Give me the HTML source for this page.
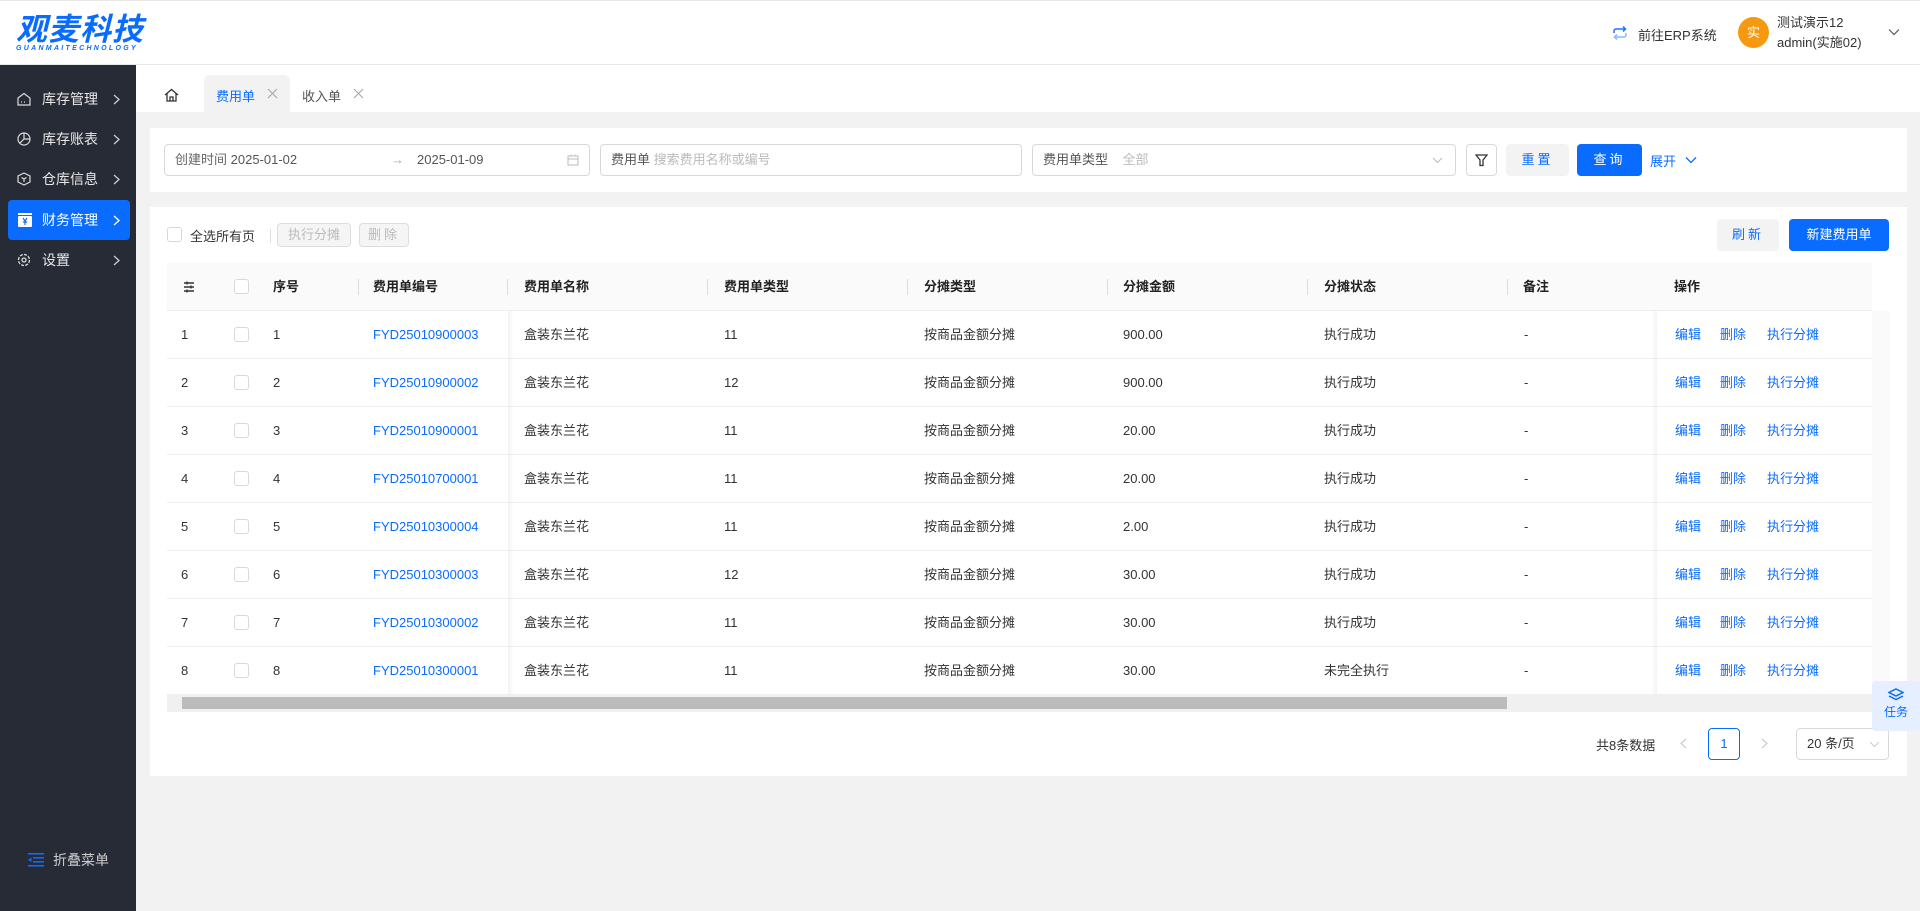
<!DOCTYPE html>
<html><head><meta charset="utf-8">
<style>
*{box-sizing:border-box;margin:0;padding:0}
body{width:1920px;height:911px;overflow:hidden;background:#f2f2f2;font-family:"Liberation Sans","Noto Sans CJK SC",sans-serif;font-size:12px;color:#333;position:relative}
.a{position:absolute}
.hdr{left:0;top:0;width:1920px;height:65px;background:#fff;border-bottom:1px solid #e8e8e8;border-top:1px solid #e8e8e8}
.side{left:0;top:65px;width:136px;height:846px;background:#272b36}
.mi{position:absolute;left:8px;width:122px;height:40px;color:#e8e8e8;font-size:14px;line-height:40px;padding-left:34px;border-radius:4px}
.mi svg{position:absolute;left:9px;top:13px}
.mi svg.ch{left:auto;right:10px;top:15px}
.mi.act{background:#0a6cff;color:#fff}
.card{background:#fff}
.inp{position:absolute;height:32px;border:1px solid #d9d9d9;border-radius:4px;background:#fff;line-height:30px;font-size:13px;color:#555;padding-left:10px}
.btn{position:absolute;height:32px;border-radius:4px;line-height:32px;text-align:center;font-size:13px}
.th{position:absolute;top:263px;height:48px;line-height:48px;font-weight:bold;color:#222;font-size:13px}
.sep{position:absolute;top:279px;width:1px;height:16px;background:#ddd}
.row{position:absolute;left:167px;width:1705px;height:48px;border-bottom:1px solid #eee}
.c{position:absolute;top:0;line-height:47px;color:#333;font-size:13px}
.cb{position:absolute;width:15px;height:15px;border:1px solid #d9d9d9;border-radius:3px;background:#fff}
.lnk{color:#0a6cff}
</style></head><body>
<div class="a hdr">
  <div class="a" style="left:16px;top:8px;color:#0a6cff;font-size:31px;font-style:italic;font-weight:bold;letter-spacing:1px;line-height:36px;font-family:'Noto Sans CJK SC',sans-serif">观麦科技</div>
  <div class="a" style="left:16px;top:44px;color:#0a6cff;font-size:7px;font-style:italic;font-weight:bold;letter-spacing:2.3px">GUANMAITECHNOLOGY</div>
  <svg class="a" style="left:1612px;top:24px" width="16" height="16" viewBox="0 0 16 16" fill="none" stroke="#1a73ff" stroke-width="1.5"><path d="M2 8V6a2 2 0 0 1 2-2h9M11 1.5 13.5 4 11 6.5"/><path d="M14 8v2a2 2 0 0 1-2 2H3M5 14.5 2.5 12 5 9.5" stroke="#8ab8ff"/></svg>
  <div class="a" style="left:1638px;top:24px;font-size:13px;color:#333">前往ERP系统</div>
  <div class="a" style="left:1738px;top:16px;width:31px;height:31px;border-radius:50%;background:#f59a10;color:#fff;text-align:center;line-height:31px;font-size:13px">实</div>
  <div class="a" style="left:1777px;top:12px;font-size:13px;color:#333;line-height:20px">测试演示12<br>admin(实施02)</div>
  <svg class="a" style="left:1888px;top:27px" width="12" height="8" viewBox="0 0 12 8" fill="none" stroke="#555" stroke-width="1.2"><path d="M1 1.5 6 6.5 11 1.5"/></svg>
</div>
<div class="a side">
  <div class="mi" style="top:14px"><svg width="14" height="14" viewBox="0 0 14 14" fill="none" stroke="#ddd" stroke-width="1.2"><path d="M1 6 7 1.5 13 6v7H1z M4 10h1M7 10h1"/></svg>库存管理<svg class="ch" width="7" height="11" viewBox="0 0 7 11" fill="none" stroke="#ccc" stroke-width="1.3"><path d="M1 1l5 4.5L1 10"/></svg></div>
  <div class="mi" style="top:54px"><svg width="14" height="14" viewBox="0 0 14 14" fill="none" stroke="#ddd" stroke-width="1.2"><circle cx="7" cy="7" r="6"/><path d="M7 1v6h6M7 7l-4 4"/></svg>库存账表<svg class="ch" width="7" height="11" viewBox="0 0 7 11" fill="none" stroke="#ccc" stroke-width="1.3"><path d="M1 1l5 4.5L1 10"/></svg></div>
  <div class="mi" style="top:94px"><svg width="14" height="14" viewBox="0 0 14 14" fill="none" stroke="#ddd" stroke-width="1.2"><path d="M7 1 13 4v6l-6 3-6-3V4z M4.5 5.5 7 7l2.5-1.5M7 7v3"/></svg>仓库信息<svg class="ch" width="7" height="11" viewBox="0 0 7 11" fill="none" stroke="#ccc" stroke-width="1.3"><path d="M1 1l5 4.5L1 10"/></svg></div>
  <div class="mi act" style="top:135px"><svg width="16" height="14" viewBox="0 0 16 14"><rect x="1" y="0" width="14" height="2" fill="#fff"/><rect x="1" y="3" width="14" height="11" rx="1" fill="#fff"/><path d="M6 5l2 3 2-3M8 8v4M6 9h4" stroke="#0a6cff" stroke-width="1.2" fill="none"/></svg>财务管理<svg class="ch" width="7" height="11" viewBox="0 0 7 11" fill="none" stroke="#fff" stroke-width="1.3"><path d="M1 1l5 4.5L1 10"/></svg></div>
  <div class="mi" style="top:175px"><svg width="14" height="14" viewBox="0 0 14 14" fill="none" stroke="#ddd" stroke-width="1.3"><circle cx="7" cy="7" r="2"/><circle cx="7" cy="7" r="5.5" stroke-dasharray="3 1.3"/></svg>设置<svg class="ch" width="7" height="11" viewBox="0 0 7 11" fill="none" stroke="#ccc" stroke-width="1.3"><path d="M1 1l5 4.5L1 10"/></svg></div>
  <svg class="a" style="left:28px;top:788px" width="16" height="14" viewBox="0 0 16 14" fill="#0a6cff"><rect x="0" y="0" width="16" height="1.6"/><rect x="5" y="4" width="11" height="1.6"/><rect x="5" y="8" width="11" height="1.6"/><rect x="0" y="12" width="16" height="1.6"/><path d="M0 6.8 3.5 4.5v4.6z"/></svg>
  <div class="a" style="left:53px;top:785px;color:#ccc;font-size:14px">折叠菜单</div>
</div>
<!-- tabs -->
<div class="a" style="left:136px;top:65px;width:1784px;height:47px;background:#fff"></div>
<svg class="a" style="left:164px;top:88px" width="15" height="14" viewBox="0 0 15 14" fill="none" stroke="#333" stroke-width="1.3"><path d="M1 7 7.5 1.5 14 7M3 5.5V13h9V5.5M6 13V9h3v4"/></svg>
<div class="a" style="left:204px;top:75px;width:86px;height:37px;background:#f2f2f2;border-radius:6px 6px 0 0"></div>
<div class="a" style="left:216px;top:86px;color:#0a6cff;font-size:13px">费用单</div>
<svg class="a" style="left:267px;top:88px" width="11" height="11" viewBox="0 0 11 11" stroke="#aaa" stroke-width="1.2"><path d="M1 1l9 9M10 1l-9 9"/></svg>
<div class="a" style="left:302px;top:86px;color:#555;font-size:13px">收入单</div>
<svg class="a" style="left:353px;top:88px" width="11" height="11" viewBox="0 0 11 11" stroke="#aaa" stroke-width="1.2"><path d="M1 1l9 9M10 1l-9 9"/></svg>
<!-- filter card -->
<div class="a card" style="left:150px;top:128px;width:1757px;height:64px"></div>
<div class="inp" style="left:164px;top:144px;width:426px"><span style="color:#666">创建时间</span> 2025-01-02<span class="a" style="left:226px;color:#aaa">→</span><span class="a" style="left:252px">2025-01-09</span><svg class="a" style="right:10px;top:9px" width="12" height="12" viewBox="0 0 12 12" fill="none" stroke="#bbb"><rect x="1" y="2" width="10" height="9"/><path d="M1 5h10M4 0.5v2M8 0.5v2"/></svg></div>
<div class="inp" style="left:600px;top:144px;width:422px"><span style="color:#555">费用单</span> <span style="color:#bbb">搜索费用名称或编号</span></div>
<div class="inp" style="left:1032px;top:144px;width:424px"><span style="color:#555">费用单类型</span>&nbsp;&nbsp;&nbsp;&nbsp;<span style="color:#bbb">全部</span><svg class="a" style="right:12px;top:12px" width="11" height="7" viewBox="0 0 11 7" fill="none" stroke="#bbb"><path d="M1 1l4.5 4.5L10 1"/></svg></div>
<div class="btn" style="left:1466px;top:144px;width:31px;border:1px solid #d9d9d9"><svg style="margin-top:9px" width="13" height="13" viewBox="0 0 13 13" fill="none" stroke="#333" stroke-width="1.3"><path d="M1 1h11L8 6v5.5H5V6z"/></svg></div>
<div class="btn" style="left:1506px;top:144px;width:63px;background:#f3f3f3;color:#0a6cff;letter-spacing:3px">重置</div>
<div class="btn" style="left:1577px;top:144px;width:65px;background:#0a6cff;color:#fff;letter-spacing:3px">查询</div>
<div class="a" style="left:1650px;top:151px;color:#0a6cff;font-size:13px">展开</div>
<svg class="a" style="left:1685px;top:156px" width="12" height="8" viewBox="0 0 12 8" fill="none" stroke="#0a6cff" stroke-width="1.3"><path d="M1 1.5 6 6.5 11 1.5"/></svg>
<!-- table card -->
<div class="a card" style="left:150px;top:207px;width:1757px;height:569px"></div>
<div class="cb" style="left:167px;top:227px"></div>
<div class="a" style="left:190px;top:226px;font-size:13px;color:#333">全选所有页</div>
<div class="a" style="left:270px;top:229px;width:1px;height:14px;background:#ddd"></div>
<div class="btn" style="left:277px;top:223px;width:74px;height:24px;line-height:22px;border:1px solid #ddd;background:#f5f5f5;color:#bbb">执行分摊</div>
<div class="btn" style="left:359px;top:223px;width:50px;height:24px;line-height:22px;border:1px solid #ddd;background:#f5f5f5;color:#bbb;letter-spacing:3px">删除</div>
<div class="btn" style="left:1717px;top:219px;width:62px;background:#f3f3f3;color:#0a6cff;letter-spacing:3px">刷新</div>
<div class="btn" style="left:1789px;top:219px;width:100px;background:#0a6cff;color:#fff">新建费用单</div>
<div class="a" style="left:167px;top:263px;width:1705px;height:48px;background:#fafafa;border-bottom:1px solid #eee"></div>
<svg class="a" style="left:183px;top:281px" width="12" height="12" viewBox="0 0 12 12" stroke="#333" stroke-width="1.4"><path d="M1 2h10M1 6h10M1 10h10"/><path d="M4 0.5v3M8 4.5v3M4 8.5v3"/></svg>
<div class="cb" style="left:234px;top:279px"></div>
<div class="th" style="left:273px">序号</div><div class="sep" style="left:358px"></div>
<div class="th" style="left:373px">费用单编号</div><div class="sep" style="left:507px"></div>
<div class="th" style="left:524px">费用单名称</div><div class="sep" style="left:707px"></div>
<div class="th" style="left:724px">费用单类型</div><div class="sep" style="left:907px"></div>
<div class="th" style="left:924px">分摊类型</div><div class="sep" style="left:1107px"></div>
<div class="th" style="left:1123px">分摊金额</div><div class="sep" style="left:1307px"></div>
<div class="th" style="left:1324px">分摊状态</div><div class="sep" style="left:1507px"></div>
<div class="th" style="left:1523px">备注</div>
<div class="th" style="left:1674px">操作</div>
<div id="rows"></div>
<div class="a" style="left:508px;top:311px;width:6px;height:383px;background:linear-gradient(to right,rgba(0,0,0,.05),rgba(0,0,0,0))"></div>
<div class="a" style="left:1651px;top:311px;width:6px;height:383px;background:linear-gradient(to left,rgba(0,0,0,.05),rgba(0,0,0,0))"></div>
<div class="a" style="left:1872px;top:311px;width:18px;height:383px;background:#fafafa"></div>
<div class="a" style="left:167px;top:694px;width:1723px;height:18px;background:#f0f0f0"></div>
<div class="a" style="left:182px;top:697px;width:1325px;height:12px;background:#bbb"></div>
<!-- pagination -->
<div class="a" style="left:1596px;top:735px;font-size:13px">共8条数据</div>
<svg class="a" style="left:1680px;top:738px" width="7" height="11" viewBox="0 0 7 11" fill="none" stroke="#ccc" stroke-width="1.2"><path d="M6 1 1 5.5 6 10"/></svg>
<div class="a" style="left:1708px;top:728px;width:32px;height:32px;border:1px solid #0a6cff;border-radius:4px;color:#0a6cff;text-align:center;line-height:30px;font-size:13px">1</div>
<svg class="a" style="left:1761px;top:738px" width="7" height="11" viewBox="0 0 7 11" fill="none" stroke="#ccc" stroke-width="1.2"><path d="M1 1l5 4.5L1 10"/></svg>
<div class="a" style="left:1796px;top:728px;width:93px;height:32px;border:1px solid #d9d9d9;border-radius:4px;line-height:30px;padding-left:10px;font-size:13px">20 条/页</div>
<svg class="a" style="left:1869px;top:741px" width="11" height="7" viewBox="0 0 11 7" fill="none" stroke="#ccc"><path d="M1 1l4.5 4.5L10 1"/></svg>
<div class="a" style="left:1872px;top:681px;width:48px;height:50px;background:#e6efff;border-radius:4px 0 0 4px;color:#0a6cff;text-align:center;font-size:12px">
<svg style="margin-top:7px" width="16" height="14" viewBox="0 0 16 14" fill="none" stroke="#0a6cff" stroke-width="1.5"><path d="M8 1 15 4.5 8 8 1 4.5z M1 8l7 3.5L15 8"/></svg><div style="line-height:14px">任务</div></div>
<script>
var d=[["FYD25010900003","11","900.00","执行成功"],["FYD25010900002","12","900.00","执行成功"],["FYD25010900001","11","20.00","执行成功"],["FYD25010700001","11","20.00","执行成功"],["FYD25010300004","11","2.00","执行成功"],["FYD25010300003","12","30.00","执行成功"],["FYD25010300002","11","30.00","执行成功"],["FYD25010300001","11","30.00","未完全执行"]];
var h="";d.forEach(function(r,i){var t=311+i*48;h+='<div class="row" style="top:'+t+'px"><div class="c" style="left:14px">'+(i+1)+'</div><div class="cb" style="left:67px;top:16px"></div><div class="c" style="left:106px">'+(i+1)+'</div><div class="c lnk" style="left:206px">'+r[0]+'</div><div class="c" style="left:357px">盒装东兰花</div><div class="c" style="left:557px">'+r[1]+'</div><div class="c" style="left:757px">按商品金额分摊</div><div class="c" style="left:956px">'+r[2]+'</div><div class="c" style="left:1157px">'+r[3]+'</div><div class="c" style="left:1357px">-</div><div class="c lnk" style="left:1508px">编辑</div><div class="c lnk" style="left:1553px">删除</div><div class="c lnk" style="left:1600px">执行分摊</div></div>';});
document.getElementById("rows").outerHTML=h;
</script>
</body></html>
